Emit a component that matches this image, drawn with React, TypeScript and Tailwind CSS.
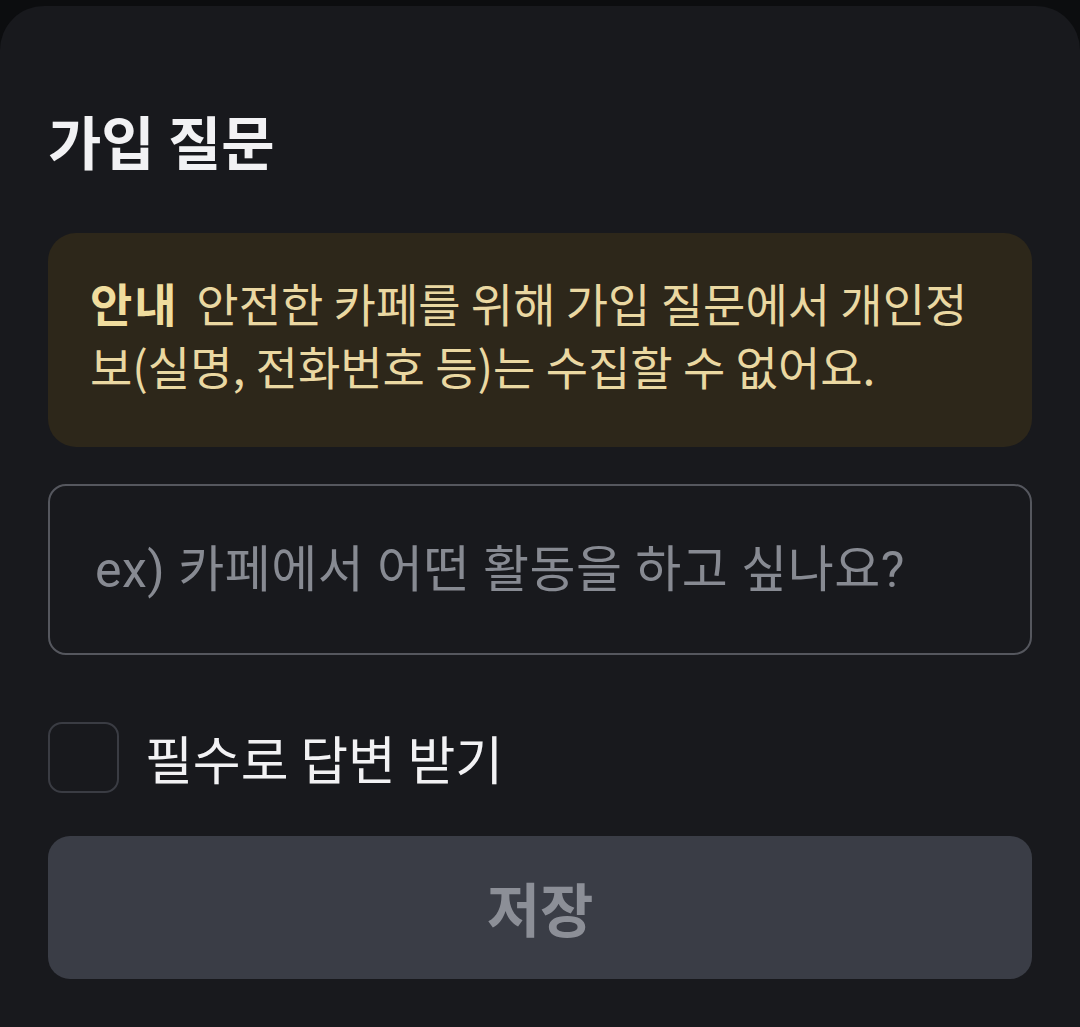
import { useState } from "react";

const KR = "font-['Noto_Sans_CJK_KR','Noto_Sans',sans-serif]";

export default function App() {
  const [checked, setChecked] = useState(false);
  const [answer, setAnswer] = useState("");

  return (
    <div className={`min-h-[1027px] w-[1080px] bg-[#0c0d0f] pt-[6px] ${KR}`}>
      <div className="flex min-h-[1021px] flex-col rounded-t-[44px] bg-[#18191d] px-[48px]">
        <h1 className="mt-[102px] text-[58px] font-bold leading-[64px] text-[#f2f2f4]">
          가입 질문
        </h1>

        <div className="mt-[61px] rounded-[28px] bg-[#2d271a] px-[42px] pt-[38px] pb-[50px]">
          <p className="break-all text-[46px] leading-[63px] text-[#ead8a2]">
            <span className="mr-[18px] font-bold tracking-[0.04em] text-[#f0dd9e]">안내</span>
            안전한 카페를 위해 가입 질문에서 개인정보(실명, 전화번호 등)는 수집할 수 없어요.
          </p>
        </div>

        <input
          value={answer}
          onChange={(e) => setAnswer(e.target.value)}
          placeholder="ex) 카페에서 어떤 활동을 하고 싶나요?"
          className="mt-[37px] h-[171px] w-full rounded-[18px] border-2 border-[#55575e] bg-transparent px-[45px] font-['Roboto','Noto_Sans_CJK_KR',sans-serif] text-[50px] tracking-[0.01em] text-[#f2f2f4] outline-none placeholder:text-[#878a92]"
        />

        <label className="mt-[67px] flex cursor-pointer items-center gap-[26px]">
          <button
            type="button"
            onClick={() => setChecked(!checked)}
            className="h-[71px] w-[71px] shrink-0 rounded-[14px] border-2 border-[#3a3c43] bg-transparent"
          />
          <span className="text-[52px] leading-[60px] text-[#f2f2f4]">필수로 답변 받기</span>
        </label>

        <button
          type="button"
          className="mt-[43px] flex h-[143px] w-full items-center justify-center rounded-[22px] bg-[#3a3d46] text-[58px] font-bold text-[#8c8f97]"
        >
          저장
        </button>
      </div>
    </div>
  );
}
